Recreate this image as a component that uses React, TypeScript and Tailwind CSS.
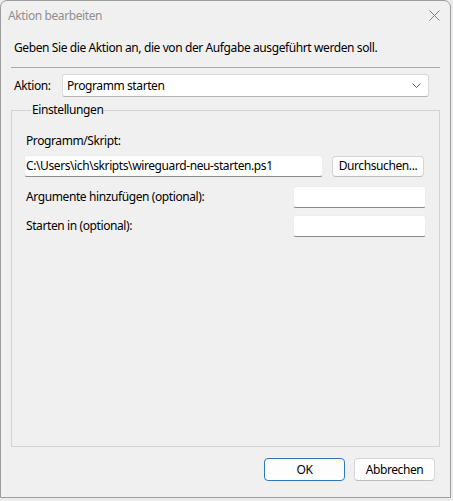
export default function App() {
  const font = { fontFamily: '"Noto Sans", "Open Sans", sans-serif' }
  return (
    <div className="h-[501px] w-[453px] bg-[#ececec]" style={font}>
      <div className="flex h-[498px] w-[451px] flex-col rounded-t-[7px] border border-[#9c9c9c] bg-[#f0f0f0] text-[12px] leading-[16px] tracking-[-0.4px] text-[#000]">
        {/* title bar */}
        <div className="flex h-[29px] shrink-0 items-center justify-between pl-[7px] pr-[8px]">
          <span className="text-[#8f8f8f]">Aktion bearbeiten</span>
          <svg width="11" height="11" viewBox="0 0 11 11" className="mr-[2px]">
            <path d="M0.5 0.5 L10.5 10.5 M10.5 0.5 L0.5 10.5" stroke="#808080" strokeWidth="1" fill="none" />
          </svg>
        </div>

        <div className="flex flex-1 flex-col px-[10px]">
          <p className="mt-[10px] pl-[3px]">Geben Sie die Aktion an, die von der Aufgabe ausgeführt werden soll.</p>
          <div className="mt-[11px] border-t border-[#a9a9a9]" />

          <div className="mt-[6px] flex items-center">
            <span className="w-[51px] pl-[3px]">Aktion:</span>
            <div className="flex h-[23px] w-[367px] items-center justify-between rounded-[3px] border border-[#dadada] border-b-[#b4b4b4] bg-white pl-[4px] pr-[7px]">
              <span>Programm starten</span>
              <svg width="9" height="5" viewBox="0 0 9 5">
                <path d="M0.5 0.5 L4.5 4.5 L8.5 0.5" stroke="#5a5a5a" strokeWidth="1" fill="none" />
              </svg>
            </div>
          </div>

          <fieldset className="mt-[5px] flex-1 border border-[#d3d3d3] pl-[12px] pr-[13px]">
            <legend className="ml-[7px] px-[1px]">Einstellungen</legend>
            <div className="pt-[15px] pl-[2px]">Programm/Skript:</div>
            <div className="mt-[6px] flex items-center gap-[9px]">
              <div className="flex h-[22px] w-[299px] items-center rounded-[3px] border border-[#ececec] border-b-[#8a8a8a] bg-white pl-[1px]">
                C:\Users\ich\skripts\wireguard-neu-starten.ps1
              </div>
              <button className="h-[21px] w-[92px] rounded-[4px] border border-[#d4d4d4] border-b-[#bdbdbd] bg-[#fdfdfd] text-[12px]">
                Durchsuchen...
              </button>
            </div>
            <div className="mt-[9px] flex items-center justify-between">
              <span className="pl-[2px]">Argumente hinzufügen (optional):</span>
              <div className="h-[22px] w-[133px] rounded-[3px] border border-[#ececec] border-b-[#8a8a8a] bg-white" />
            </div>
            <div className="mt-[7px] flex items-center justify-between">
              <span className="pl-[2px]">Starten in (optional):</span>
              <div className="h-[22px] w-[133px] rounded-[3px] border border-[#ececec] border-b-[#8a8a8a] bg-white" />
            </div>
          </fieldset>

          <div className="mt-[11px] mb-[16px] flex justify-end gap-[9px] pr-[5px]">
            <button className="h-[23px] w-[81px] rounded-[4px] border border-[#2f76c0] bg-[#fdfdfd] text-[12px]">OK</button>
            <button className="h-[23px] w-[81px] rounded-[4px] border border-[#d4d4d4] border-b-[#bdbdbd] bg-[#fdfdfd] text-[12px]">
              Abbrechen
            </button>
          </div>
        </div>
      </div>
    </div>
  )
}
